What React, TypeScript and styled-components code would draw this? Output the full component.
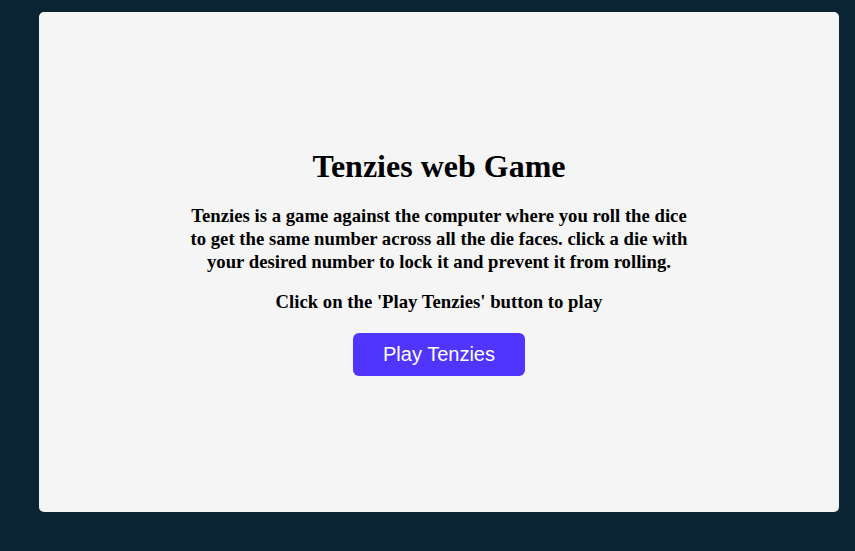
import React from "react";
import styled, { createGlobalStyle } from "styled-components";

const GlobalStyle = createGlobalStyle`
  html, body {
    margin: 0;
    padding: 0;
    background: #0B2434;
  }
  body {
    font-family: "Liberation Serif", "Times New Roman", serif;
  }
`;

const Page = styled.div`
  padding: 12px 0 0 39px;
`;

const Card = styled.main`
  width: 800px;
  height: 500px;
  box-sizing: border-box;
  background: #F5F5F5;
  border-radius: 5px;
  display: flex;
  flex-direction: column;
  align-items: center;
  justify-content: center;
  text-align: center;
  color: #000;
`;

const Title = styled.h1`
  font-family: "Liberation Serif", "Times New Roman", serif;
  font-size: 32px;
  font-weight: 700;
  margin: 0 0 19px;
`;

const Description = styled.h3`
  font-size: 18.72px;
  font-weight: 700;
  line-height: 23px;
  max-width: 505px;
  margin: 0 0 17px;
`;

const Instruction = styled.h3`
  font-size: 18.72px;
  font-weight: 700;
  line-height: 23px;
  margin: 0 0 20px;
`;

const PlayButton = styled.button`
  width: 172px;
  height: 43px;
  border: none;
  border-radius: 6px;
  background: #5035FF;
  color: #fff;
  font-family: "Liberation Sans", Arial, sans-serif;
  font-size: 20px;
  cursor: pointer;
`;

export default function App() {
  return (
    <>
      <GlobalStyle />
      <Page>
        <Card>
          <Title>Tenzies web Game</Title>
          <Description>
            Tenzies is a game against the computer where you roll the dice to get the same number across all the die faces. click a die with your desired number to lock it and prevent it from rolling.
          </Description>
          <Instruction>Click on the 'Play Tenzies' button to play</Instruction>
          <PlayButton>Play Tenzies</PlayButton>
        </Card>
      </Page>
    </>
  );
}
